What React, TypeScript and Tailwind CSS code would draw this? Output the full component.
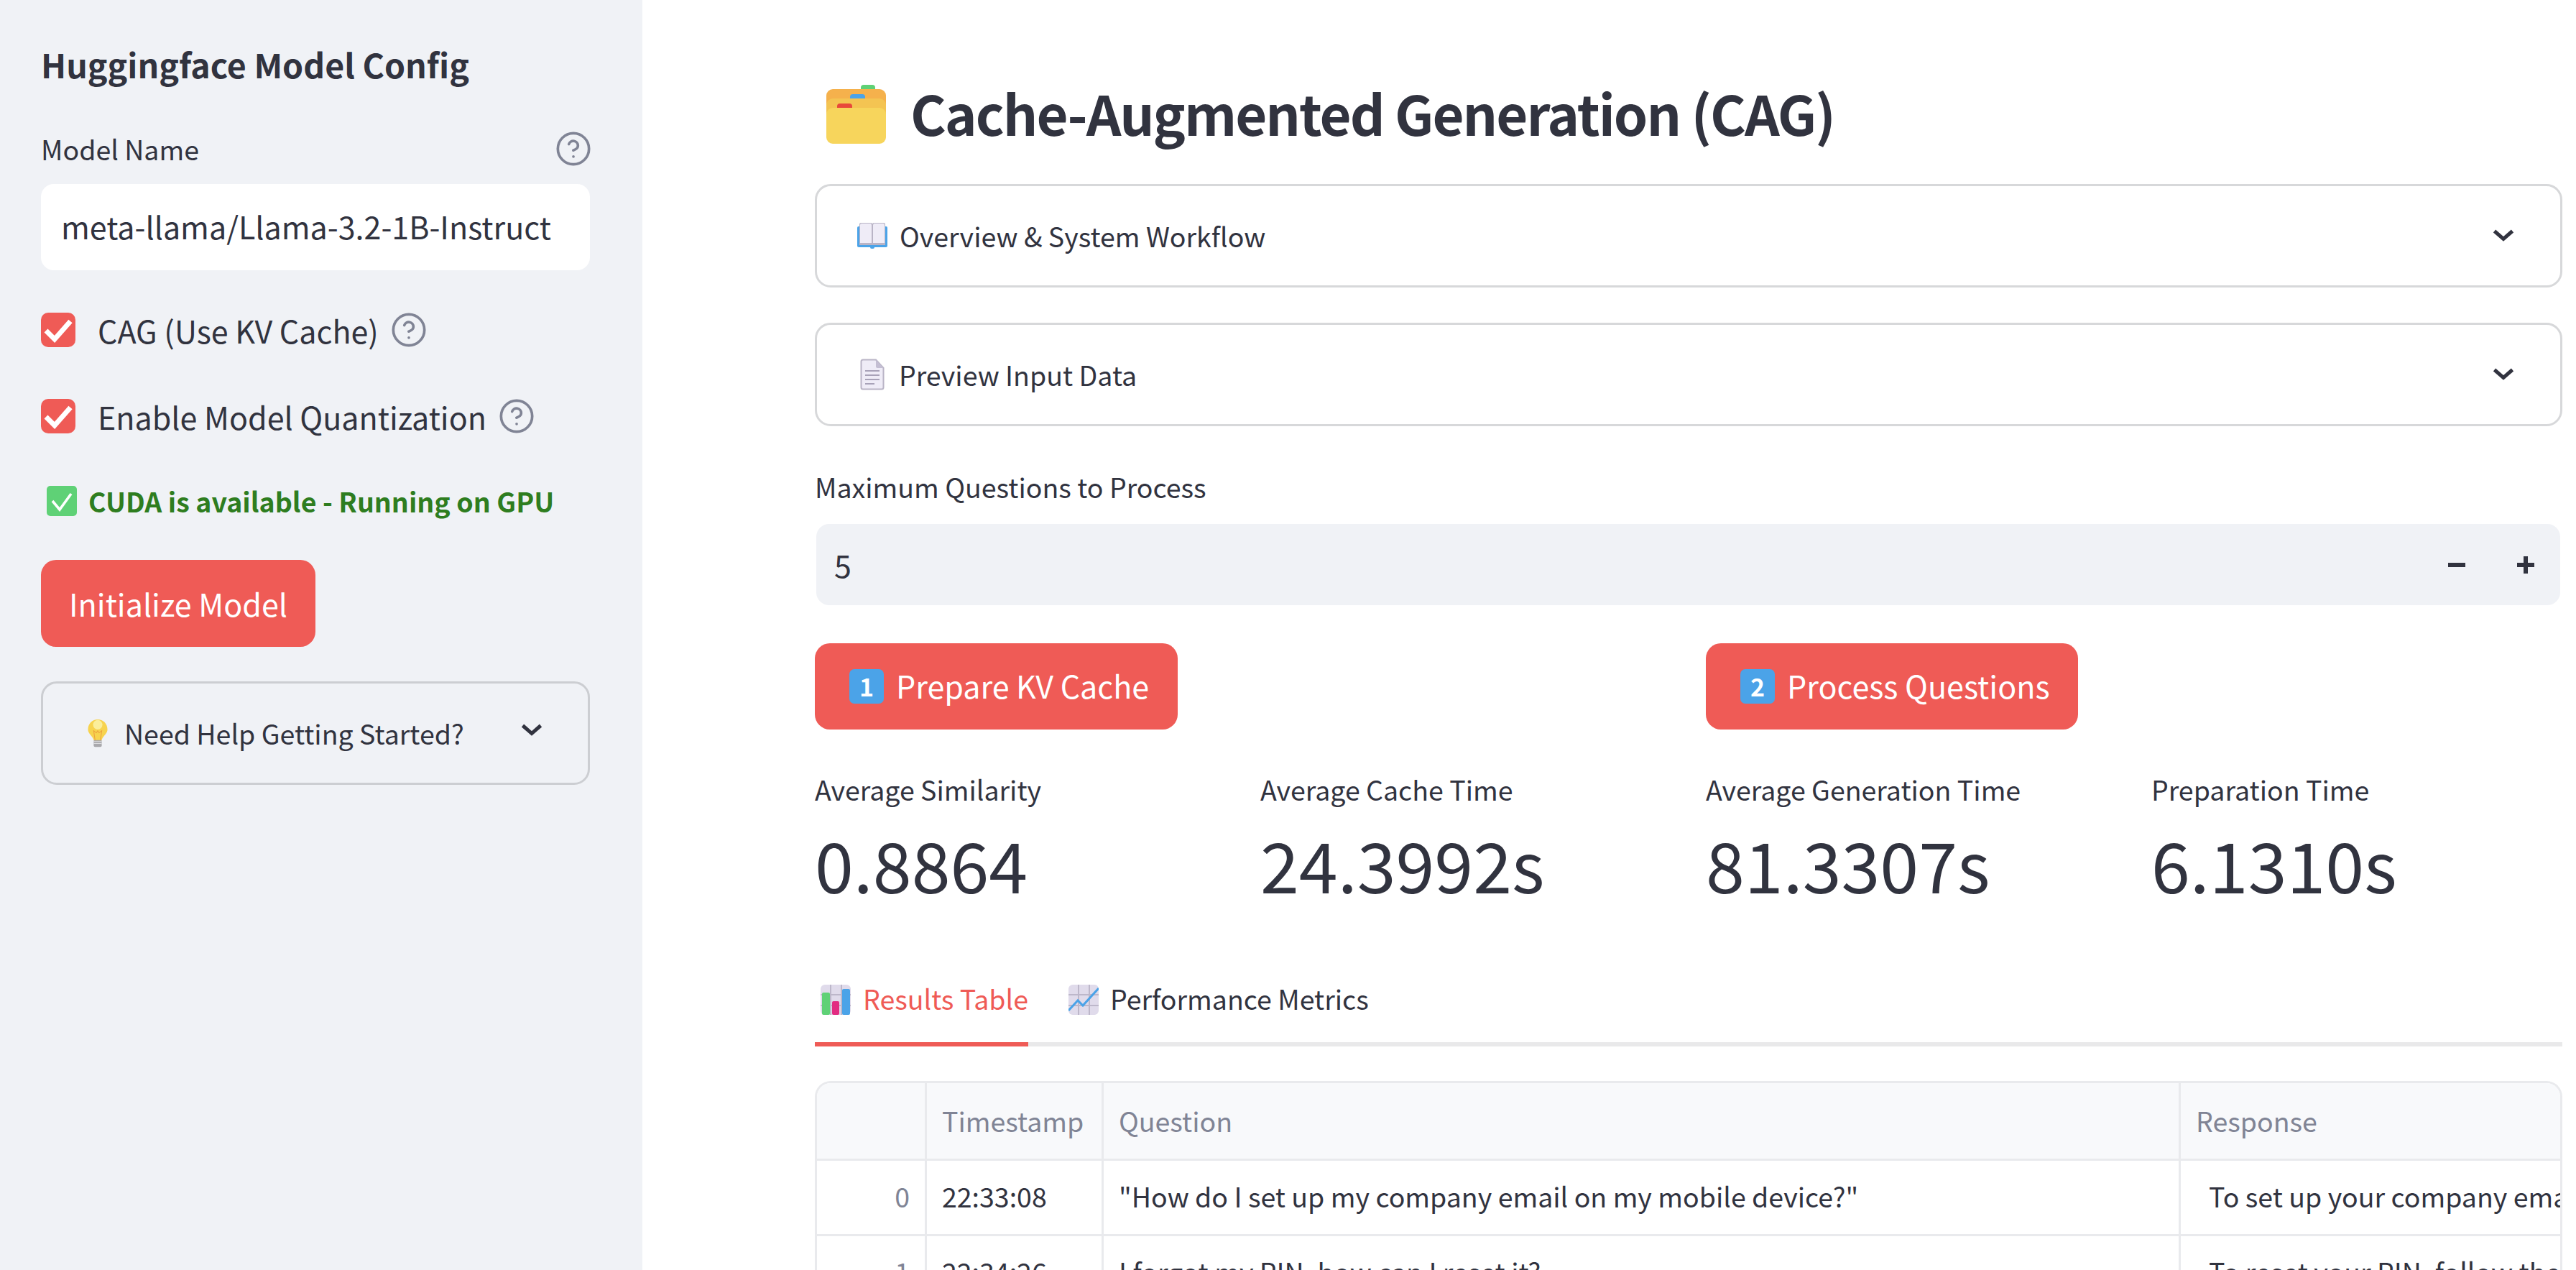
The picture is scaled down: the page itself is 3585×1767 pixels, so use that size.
import React from "react";
import { CircleHelp } from "lucide-react";

const font = { fontFamily: '"Noto Sans CJK SC", "Noto Sans", sans-serif' };

function Chevron({ className = "" }: { className?: string }) {
  return (
    <svg viewBox="0 0 30 20" className={`w-[30px] h-[20px] ${className}`} fill="none">
      <path d="M2.5 3.5 L15 14.5 L27.5 3.5" stroke="#31333f" strokeWidth="5" />
    </svg>
  );
}

function Help({ className = "" }: { className?: string }) {
  return <CircleHelp className={`w-[52px] h-[52px] text-[#808495] shrink-0 ${className}`} strokeWidth={1.7} />;
}

function Check() {
  return (
    <div className="w-[48px] h-[48px] rounded-[10px] bg-[#ef5b56] flex items-center justify-center shrink-0">
      <svg viewBox="0 0 48 48" className="w-[48px] h-[48px]" fill="none">
        <path d="M7 25 L19 37 L41 12" stroke="#fff" strokeWidth="7" />
      </svg>
    </div>
  );
}

function FolderIcon() {
  return (
    <svg viewBox="0 0 84 82" className="w-[84px] h-[82px] mt-[6px] shrink-0">
      <rect x="48" y="0" width="20" height="12" rx="4" fill="#5fd176" />
      <rect x="0" y="6" width="83" height="60" rx="9" fill="#f5b14c" />
      <rect x="33" y="13" width="21" height="12" rx="4" fill="#4ba3e8" />
      <rect x="0" y="19" width="83" height="50" rx="9" fill="#f4c452" />
      <rect x="15" y="26" width="21" height="12" rx="4" fill="#e8483a" />
      <rect x="0" y="32" width="83" height="50" rx="9" fill="#f7d55c" />
    </svg>
  );
}

function BookIcon() {
  return (
    <svg viewBox="0 0 42 36" className="w-[42px] h-[36px] shrink-0">
      <rect x="0" y="5" width="42" height="29" rx="2" fill="#4ba3e8" />
      <rect x="18" y="30" width="6" height="6" rx="2" fill="#4ba3e8" />
      <path d="M3 2 Q3 0 5 0 L19 0 Q21 0 21 2 L21 31 L3 31 Z" fill="#b9b4c6" />
      <path d="M21 2 Q21 0 23 0 L37 0 Q39 0 39 2 L39 31 L21 31 Z" fill="#b9b4c6" />
      <path d="M4 3 Q4 1 6 1 L19 1 L20 3 L20 28 L4 28 Z" fill="#efecf7" />
      <path d="M22 3 L23 1 L36 1 Q38 1 38 3 L38 28 L22 28 Z" fill="#efecf7" />
    </svg>
  );
}

function PageIcon() {
  return (
    <svg viewBox="0 0 34 44" className="w-[34px] h-[44px] shrink-0 ml-[4px] mr-[3px]">
      <path d="M1.5 4 Q1.5 1.5 4 1.5 L22 1.5 L32.5 13 L32.5 40 Q32.5 42.5 30 42.5 L4 42.5 Q1.5 42.5 1.5 40 Z" fill="#efecf7" stroke="#b9b4c6" strokeWidth="2" />
      <path d="M22 1.5 L32.5 13 L24 13 Q22 13 22 11 Z" fill="#c4bed3" />
      <path d="M7 17 H27 M7 23 H27 M7 29 H27 M7 35 H20" stroke="#a8a2b8" strokeWidth="2" />
    </svg>
  );
}

function BulbIcon() {
  return (
    <svg viewBox="0 0 30 42" className="w-[28px] h-[41px] shrink-0">
      <rect x="9" y="30" width="12" height="11" rx="2" fill="#a9a9ad" />
      <path d="M9 33 H21 M9 36 H21" stroke="#dddde0" strokeWidth="1.2" />
      <path d="M15 0 C7 0 0.5 6 0.5 15 C0.5 22 8 25 9 31 L21 31 C22 25 29.5 22 29.5 15 C29.5 6 23 0 15 0 Z" fill="#f7d34e" />
      <ellipse cx="15" cy="8" rx="7" ry="7" fill="#fbee9a" />
      <path d="M11 31 L9 17 L13 20 L15 17 L17 20 L21 17 L19 31" fill="none" stroke="#eda23e" strokeWidth="1.1" />
    </svg>
  );
}

function GreenCheck() {
  return (
    <svg viewBox="0 0 42 42" className="w-[42px] h-[42px] shrink-0">
      <rect width="42" height="42" rx="5" fill="#5fd176" />
      <path d="M8 21 L18 33 L34 11" fill="none" stroke="#fff" strokeWidth="3.6" />
    </svg>
  );
}

function BarsIcon() {
  return (
    <svg viewBox="0 0 42 42" className="w-[42px] h-[42px] shrink-0">
      <rect width="42" height="42" rx="6" fill="#e0dbeb" />
      <path d="M14 0 V42 M29 0 V42 M0 14 H42 M0 29 H42" stroke="#bdb7ca" strokeWidth="2" />
      <rect x="2" y="11" width="11" height="31" rx="2" fill="#5fd176" />
      <rect x="16" y="23" width="10" height="19" rx="2" fill="#e22b82" />
      <rect x="30" y="6" width="11" height="36" rx="2" fill="#4ba3e8" />
    </svg>
  );
}

function LineIcon() {
  return (
    <svg viewBox="0 0 42 42" className="w-[42px] h-[42px] shrink-0">
      <rect width="42" height="42" rx="6" fill="#e0dbeb" />
      <path d="M14 0 V42 M29 0 V42 M0 14 H42 M0 29 H42" stroke="#bdb7ca" strokeWidth="2" />
      <path d="M0 36 L13 22 L20 29 L42 5" fill="none" stroke="#4ba3e8" strokeWidth="3" />
    </svg>
  );
}

function Keycap({ n }: { n: string }) {
  return (
    <span className="w-[48px] h-[48px] rounded-[7px] bg-[#4ba3e8] text-white text-[34px] font-bold flex items-center justify-center shrink-0 leading-none">
      {n}
    </span>
  );
}

function Expander({ icon, label }: { icon: React.ReactNode; label: string }) {
  return (
    <div className="h-[144px] rounded-[22px] border-[3px] border-[#d7d8da] flex items-center pl-[56px] pr-[64px]">
      {icon}
      <span className="ml-[17px] text-[37.5px]">{label}</span>
      <Chevron className="ml-auto" />
    </div>
  );
}

function Metric({ label, value }: { label: string; value: string }) {
  return (
    <div>
      <div className="h-[44px] flex items-center text-[37.5px] pb-[3px]">{label}</div>
      <div className="mt-[29px] h-[100px] flex items-center text-[97px]">{value}</div>
    </div>
  );
}

const cell = "border-r-[3px] border-[#e9eaed] flex items-center px-[21px] text-[37.5px] whitespace-nowrap overflow-hidden";

function Row({ i, t, q, r }: { i: string; t: string; q: string; r: string }) {
  const h = `h-[105px] border-b-[3px] border-[#e9eaed] pb-[3px]`;
  return (
    <>
      <div className={`${cell} ${h} justify-end text-[#808495]`}>{i}</div>
      <div className={`${cell} ${h}`}>{t}</div>
      <div className={`${cell} ${h}`}>{q}</div>
      <div className={`${h} flex items-center pl-[39px] text-[37.5px] whitespace-pre overflow-hidden`}>{r}</div>
    </>
  );
}

export default function App() {
  return (
    <div className="h-screen w-full overflow-hidden flex bg-white text-[#31333f]" style={font}>
      <aside className="w-[894px] shrink-0 bg-[#f0f2f6] pl-[57px] pr-[73px] pt-[60px]">
        <h2 className="h-[58px] flex items-center text-[46.5px] font-bold whitespace-nowrap">Huggingface Model Config</h2>
        <div className="mt-[66px] h-[46px] flex items-center justify-between text-[37.5px]">
          <span>Model Name</span>
          <Help className="-mr-[3px]" />
        </div>
        <div className="mt-[26px] h-[120px] rounded-[18px] bg-white flex items-center pl-[28px] pb-[4px] text-[43px] whitespace-nowrap overflow-hidden">
          meta-llama/Llama-3.2-1B-Instruct
        </div>
        <div className="mt-[59px] h-[48px] flex items-center text-[43px]">
          <Check />
          <span className="ml-[31px]">CAG (Use KV Cache)</span>
          <Help className="ml-[16px]" />
        </div>
        <div className="mt-[72px] h-[48px] flex items-center text-[43px] whitespace-nowrap">
          <Check />
          <span className="ml-[31px]">Enable Model Quantization</span>
          <Help className="ml-[16px]" />
        </div>
        <div className="mt-[73px] h-[42px] pl-[8px] flex items-center text-[37.5px] font-bold text-[#2e7d1f] whitespace-nowrap">
          <GreenCheck />
          <span className="ml-[16px]">CUDA is available - Running on GPU</span>
        </div>
        <button className="mt-[61px] block w-[382px] h-[121px] rounded-[21px] bg-[#ef5b56] text-white text-[43px]">
          Initialize Model
        </button>
        <div className="mt-[48px] h-[144px] w-[764px] rounded-[22px] border-[3px] border-[#ccced2] flex items-center pl-[62px]">
          <BulbIcon />
          <span className="ml-[23px] text-[37.5px] whitespace-nowrap">Need Help Getting Started?</span>
          <Chevron className="ml-[79px] -mt-[8px]" />
        </div>
      </aside>

      <main className="flex-1 min-w-0 pl-[240px] pr-[19px] pt-[100px]">
        <div className="h-[112px] flex items-center pl-[16px]">
          <FolderIcon />
          <h1 className="ml-[33px] text-[76px] tracking-[-2px] font-bold whitespace-nowrap">Cache-Augmented Generation (CAG)</h1>
        </div>
        <div className="mt-[44px]">
          <Expander icon={<BookIcon />} label="Overview & System Workflow" />
        </div>
        <div className="mt-[49px]">
          <Expander icon={<PageIcon />} label="Preview Input Data" />
        </div>
        <div className="mt-[62px] h-[44px] flex items-center text-[37.5px]">Maximum Questions to Process</div>
        <div className="mt-[30px] h-[113px] ml-[2px] mr-[3px] rounded-[18px] bg-[#f0f2f6] flex items-center pl-[25px] text-[43px]">
          <span>5</span>
          <svg viewBox="0 0 24 24" className="w-[24px] h-[24px] ml-auto">
            <rect x="0" y="9" width="24" height="6" fill="#31333f" />
          </svg>
          <svg viewBox="0 0 24 24" className="w-[24px] h-[24px] ml-[72px] mr-[36px]">
            <rect x="0" y="9" width="24" height="6" fill="#31333f" />
            <rect x="9" y="0" width="6" height="24" fill="#31333f" />
          </svg>
        </div>
        <div className="mt-[53px] grid grid-cols-2 gap-[48px]">
          <div>
            <button className="h-[120px] w-[505px] rounded-[21px] bg-[#ef5b56] text-white text-[43px] flex items-center pl-[48px] whitespace-nowrap">
              <Keycap n="1" />
              <span className="ml-[17px] pb-[4px]">Prepare KV Cache</span>
            </button>
          </div>
          <div>
            <button className="h-[120px] w-[518px] rounded-[21px] bg-[#ef5b56] text-white text-[43px] flex items-center pl-[48px] whitespace-nowrap">
              <Keycap n="2" />
              <span className="ml-[17px] pb-[4px]">Process Questions</span>
            </button>
          </div>
        </div>
        <div className="mt-[63px] grid grid-cols-4 gap-[48px]">
          <Metric label="Average Similarity" value="0.8864" />
          <Metric label="Average Cache Time" value="24.3992s" />
          <Metric label="Average Generation Time" value="81.3307s" />
          <Metric label="Preparation Time" value="6.1310s" />
        </div>
        <div className="mt-[81px] h-[124px] flex border-b-[6px] border-[#e9e9ea] text-[37.5px]">
          <div className="h-[124px] w-[297px] border-b-[6px] border-[#ef5b56] flex items-center pl-[8px] text-[#ef5b56] whitespace-nowrap">
            <BarsIcon />
            <span className="ml-[17px] pb-[4px]">Results Table</span>
          </div>
          <div className="h-[118px] flex items-center pl-[56px] whitespace-nowrap">
            <LineIcon />
            <span className="ml-[16px] pb-[4px]">Performance Metrics</span>
          </div>
        </div>
        <div className="mt-[48px] rounded-t-[22px] border-[3px] border-b-0 border-[#e9eaed] overflow-hidden grid grid-cols-[153px_246px_1499px_1fr]">
          <div className={`${cell} h-[108px] border-b-[3px] bg-[#f8f9fb]`}></div>
          <div className={`${cell} h-[108px] border-b-[3px] bg-[#f8f9fb] text-[#808495]`}>Timestamp</div>
          <div className={`${cell} h-[108px] border-b-[3px] bg-[#f8f9fb] text-[#808495]`}>Question</div>
          <div className="h-[108px] border-b-[3px] border-[#e9eaed] bg-[#f8f9fb] text-[#808495] flex items-center pl-[21px] text-[37.5px]">Response</div>
          <Row i="0" t="22:33:08" q={'"How do I set up my company email on my mobile device?"'} r="To set up your company email on your mobile device, follow these steps" />
          <Row i="1" t="22:34:26" q="I forgot my PIN, how can I reset it?" r="To reset your PIN, follow these steps to regain access to your account" />
        </div>
      </main>
    </div>
  );
}
